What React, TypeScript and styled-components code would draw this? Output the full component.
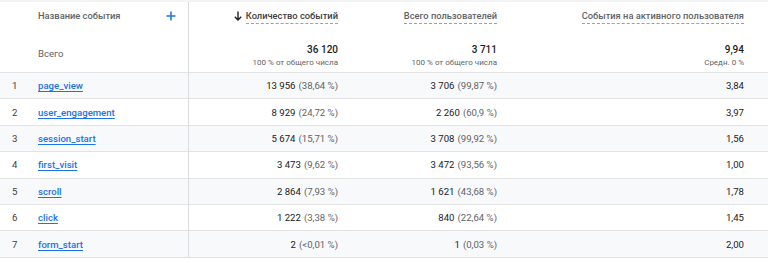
import React from 'react';
import styled, { createGlobalStyle } from 'styled-components';

const GlobalStyle = createGlobalStyle`
  html, body {
    margin: 0;
    padding: 0;
    background: #ffffff;
  }
  body {
    font-family: Roboto, "Noto Sans", Arial, sans-serif;
    color: #202124;
  }
`;

type Row = {
    name: string;
    count: string;
    countPct: string;
    users: string;
    usersPct: string;
    perUser: string;
};

const rows: Row[] = [
    { name: 'page_view', count: '13 956', countPct: '(38,64 %)', users: '3 706', usersPct: '(99,87 %)', perUser: '3,84' },
    { name: 'user_engagement', count: '8 929', countPct: '(24,72 %)', users: '2 260', usersPct: '(60,9 %)', perUser: '3,97' },
    { name: 'session_start', count: '5 674', countPct: '(15,71 %)', users: '3 708', usersPct: '(99,92 %)', perUser: '1,56' },
    { name: 'first_visit', count: '3 473', countPct: '(9,62 %)', users: '3 472', usersPct: '(93,56 %)', perUser: '1,00' },
    { name: 'scroll', count: '2 864', countPct: '(7,93 %)', users: '1 621', usersPct: '(43,68 %)', perUser: '1,78' },
    { name: 'click', count: '1 222', countPct: '(3,38 %)', users: '840', usersPct: '(22,64 %)', perUser: '1,45' },
    { name: 'form_start', count: '2', countPct: '(<0,01 %)', users: '1', usersPct: '(0,03 %)', perUser: '2,00' },
];

const Page = styled.div`
  width: 768px;
  height: 263px;
  overflow: hidden;
  border-top: 2px solid #f1f3f4;
  box-sizing: border-box;
`;

const Grid = styled.div`
  display: grid;
  grid-template-columns: 189px 165px 159px 255px;
`;

const HeadCell = styled.div<{ $first?: boolean; $right?: number }>`
  height: 71px;
  box-sizing: border-box;
  border-bottom: 1px solid #e3e3e3;
  border-right: ${(p) => (p.$first ? '1px solid #dadce0' : 'none')};
  display: flex;
  flex-direction: column;
  align-items: ${(p) => (p.$first ? 'stretch' : 'flex-end')};
  padding: 6px ${(p) => p.$right ?? 16}px 0 ${(p) => (p.$first ? 38 : 0)}px;
`;

const NameHead = styled.div`
  display: flex;
  justify-content: space-between;
  align-items: center;
  height: 16px;
  padding-right: 12px;
`;

const Label = styled.span<{ $active?: boolean; $dotted?: boolean }>`
  font-size: 9.3px;
  font-weight: 500;
  color: ${(p) => (p.$active ? '#3c4043' : '#5f6368')};
  line-height: 13px;
  border-bottom: ${(p) => (p.$dotted ? '1px dashed #9aa0a6' : 'none')};
  padding-bottom: 1px;
`;

const MetricHead = styled.div`
  height: 16px;
  display: flex;
  align-items: center;
  gap: 4px;
`;

const TotalLabel = styled.div`
  margin-top: 24px;
  font-size: 9.6px;
  color: #5f6368;
`;

const TotalValue = styled.div`
  margin-top: 19px;
  font-size: 10px;
  font-weight: 500;
  color: #202124;
  line-height: 13px;
`;

const TotalNote = styled.div`
  font-size: 8px;
  color: #5f6368;
  line-height: 13px;
`;

const Cell = styled.div<{ $shade: boolean; $first?: boolean; $right?: number }>`
  height: 26.4px;
  box-sizing: border-box;
  background: ${(p) => (p.$shade ? '#f8f9fa' : '#ffffff')};
  border-bottom: 1px solid #e3e3e3;
  border-right: ${(p) => (p.$first ? '1px solid #dadce0' : 'none')};
  display: flex;
  align-items: center;
  justify-content: ${(p) => (p.$first ? 'flex-start' : 'flex-end')};
  padding: 0 ${(p) => p.$right ?? 16}px 0 ${(p) => (p.$first ? 12 : 0)}px;
  font-size: 9.6px;
  color: #202124;
  white-space: nowrap;
`;

const Index = styled.span`
  width: 26px;
  color: #3c4043;
`;

const EventLink = styled.a`
  color: #1a73e8;
  text-decoration: underline;
  text-underline-offset: 2px;
  font-weight: 500;
`;

const Pct = styled.span`
  color: #5f6368;
  margin-left: 3px;
`;

const PlusIcon = () => (
    <svg width="10" height="10" viewBox="0 0 10 10">
        <path d="M5 0.5v9M0.5 5h9" stroke="#1a73e8" strokeWidth="1.5" />
    </svg>
);

const ArrowDown = () => (
    <svg width="8" height="10" viewBox="0 0 8 10">
        <path d="M4 0.5v8.5M0.8 5.8L4 9l3.2-3.2" stroke="#202124" strokeWidth="1.4" fill="none" />
    </svg>
);

const App = () => {
    return (
        <>
            <GlobalStyle />
            <Page>
                <Grid>
                    <HeadCell $first $right={0}>
                        <NameHead>
                            <Label>Название события</Label>
                            <PlusIcon />
                        </NameHead>
                        <TotalLabel>Всего</TotalLabel>
                    </HeadCell>
                    <HeadCell>
                        <MetricHead>
                            <ArrowDown />
                            <Label $active $dotted>Количество событий</Label>
                        </MetricHead>
                        <TotalValue>36 120</TotalValue>
                        <TotalNote>100 % от общего числа</TotalNote>
                    </HeadCell>
                    <HeadCell>
                        <MetricHead>
                            <Label $dotted>Всего пользователей</Label>
                        </MetricHead>
                        <TotalValue>3 711</TotalValue>
                        <TotalNote>100 % от общего числа</TotalNote>
                    </HeadCell>
                    <HeadCell $right={24}>
                        <MetricHead>
                            <Label $dotted>События на активного пользователя</Label>
                        </MetricHead>
                        <TotalValue>9,94</TotalValue>
                        <TotalNote>Средн. 0 %</TotalNote>
                    </HeadCell>

                    {rows.map((r, i) => {
                        const shade = i % 2 === 0;
                        return (
                            <React.Fragment key={r.name}>
                                <Cell $shade={shade} $first>
                                    <Index>{i + 1}</Index>
                                    <EventLink href="#">{r.name}</EventLink>
                                </Cell>
                                <Cell $shade={shade}>
                                    {r.count}
                                    <Pct>{r.countPct}</Pct>
                                </Cell>
                                <Cell $shade={shade}>
                                    {r.users}
                                    <Pct>{r.usersPct}</Pct>
                                </Cell>
                                <Cell $shade={shade} $right={24}>
                                    {r.perUser}
                                </Cell>
                            </React.Fragment>
                        );
                    })}
                </Grid>
            </Page>
        </>
    );
};

export default App;
